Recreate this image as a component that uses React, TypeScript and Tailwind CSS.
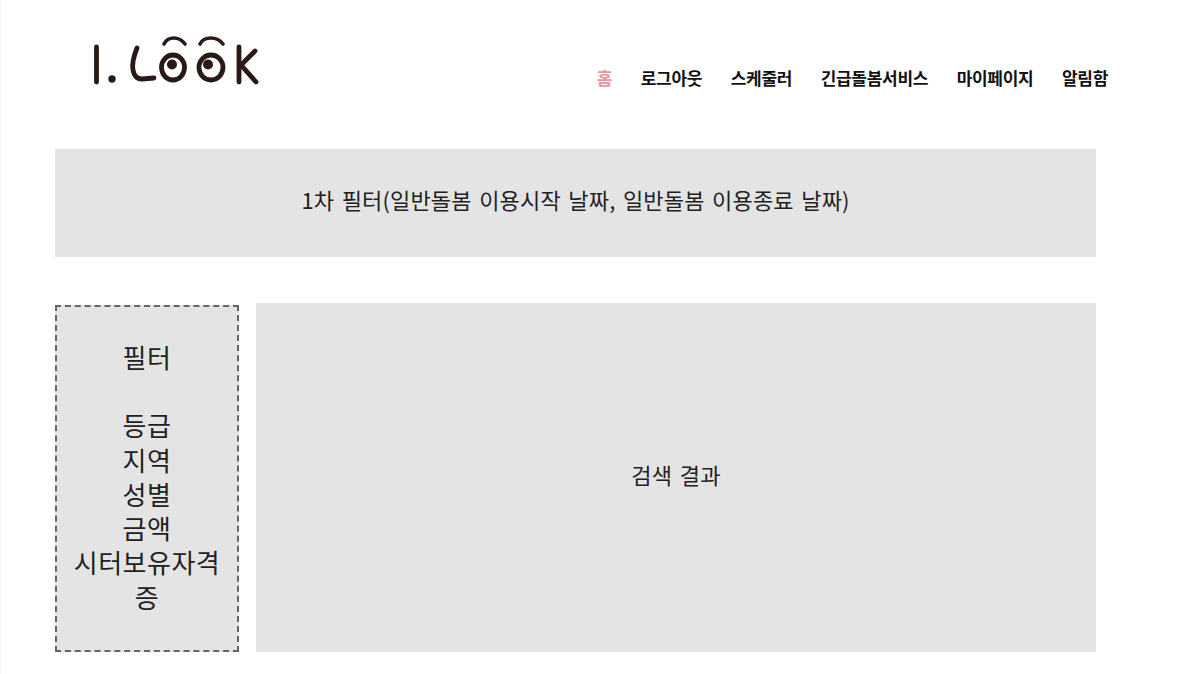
import React from "react";

const NAV = ["로그아웃", "스케줄러", "긴급돌봄서비스", "마이페이지", "알림함"];
const FILTERS = ["등급", "지역", "성별", "금액", "시터보유자격증"];

function Logo() {
  return (
    <svg width="172" height="52" viewBox="90 34 172 52" fill="none" stroke="#2a1a17" strokeWidth="4.8" strokeLinecap="round" aria-label="I. LOOK">
      <path d="M96.5 47V82" />
      <circle cx="112" cy="79" r="3.7" fill="#2a1a17" stroke="none" />
      <path d="M137 48C133 58 132 65 133 70C134 76 137 79 142 79L154 78" />
      <ellipse cx="173" cy="67.5" rx="11.5" ry="12.5" />
      <circle cx="172" cy="64.5" r="5" fill="#2a1a17" stroke="none" />
      <path d="M164 44C168 36 179 36 185 44" strokeWidth="3.6" />
      <ellipse cx="211" cy="67.5" rx="12" ry="12.5" />
      <circle cx="208" cy="64.5" r="5" fill="#2a1a17" stroke="none" />
      <path d="M200 44C204 36 217 36 223 44" strokeWidth="3.6" />
      <path d="M239 47V82" />
      <path d="M255 51L241 65L256 82" />
    </svg>
  );
}

export default function App() {
  return (
    <div className="w-[1200px] h-[674px] bg-white overflow-hidden border-l border-[#f6f6f6] font-['Noto_Sans_CJK_KR','Noto_Sans',sans-serif] text-[#222]">
      {/* Header */}
      <header className="h-[149px] pl-[89px] pr-[92px] pt-[34px] flex items-start justify-between">
        <Logo />
        <nav className="flex gap-[28.6px] pt-[29px] text-[17px] leading-[30px] font-bold tracking-[-0.3px] text-[#111]">
          <span className="text-[#e8929f]">홈</span>
          {NAV.map((item) => (
            <span key={item}>{item}</span>
          ))}
        </nav>
      </header>

      <main className="w-[1041px] ml-[54px]">
        <div className="h-[108px] pb-[8px] bg-[#e4e4e4] flex items-center justify-center text-[22px] tracking-[0.15px] [word-spacing:2.5px]">
          1차 필터(일반돌봄 이용시작 날짜, 일반돌봄 이용종료 날짜)
        </div>

        <div className="mt-[46px] flex gap-[17px] h-[349px]">
          <aside className="w-[184px] mt-[2px] border-2 border-dashed border-[#666] bg-[#e4e4e4] pt-[33px] px-[14px] text-center text-[26px] leading-[34.3px] tracking-[0.5px]">
            <div className="mb-[34px]">필터</div>
            {FILTERS.map((item) => (
              <div key={item}>{item}</div>
            ))}
          </aside>
          <section className="flex-1 pb-[6px] bg-[#e4e4e4] flex items-center justify-center text-[22px] tracking-[0.2px] [word-spacing:2.5px]">
            검색 결과
          </section>
        </div>
      </main>
    </div>
  );
}
